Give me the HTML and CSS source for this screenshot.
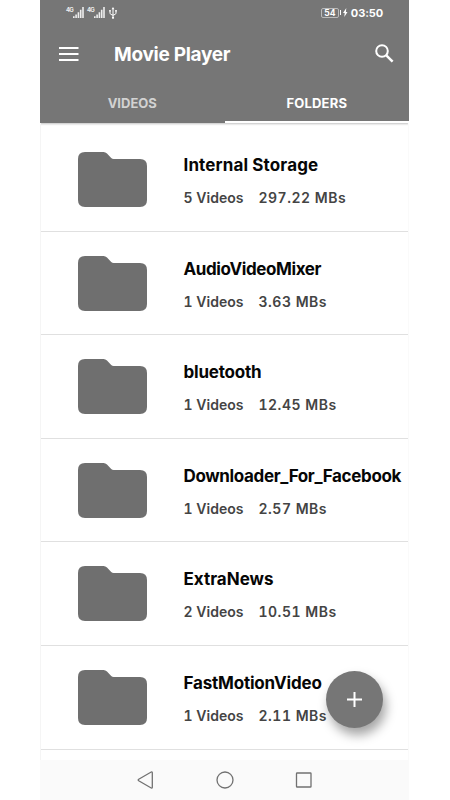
FILE: index.html
```html
<!DOCTYPE html>
<html lang="en">
<head>
    <meta charset="utf-8">
    <title>Movie Player</title>
    <link rel="stylesheet" href="styles.css">
</head>
<body>
    <!-- Shared icons -->
    <svg class="defs" width="0" height="0">
        <symbol id="folder" viewBox="0 0 69 55">
            <path d="M7 0H25.500q2 0 3.500 1.500l4.200 4.400q1 1 2.500 1H62q7 0 7 7V48q0 7-7 7H7q-7 0-7-7V7q0-7 7-7z" fill="currentColor"/>
        </symbol>
        <symbol id="signal" viewBox="0 0 11 11">
            <path d="M0 9.300h1.600V11H0zM2.300 7.500h1.600V11H2.300zM4.600 5.300h1.600V11H4.600zM6.900 2.700h1.600V11H6.900zM9.200 0h1.600v11H9.200z" fill="currentColor"/>
        </symbol>
    </svg>

    <div class="phone">
        <header class="header">
            <div class="status-bar">
                <div class="sim"><span>4G</span><svg width="11" height="11"><use href="#signal"/></svg></div>
                <div class="sim"><span>4G</span><svg width="11" height="11"><use href="#signal"/></svg></div>
                <svg class="usb" width="8" height="12" viewBox="0 0 8 12" fill="none" stroke="currentColor">
                    <path d="M4 1.500v9M1 4v2.200q0 1.300 3 2M7 4v2.200q0 1.300-3 2"/>
                    <path d="M2.600 2.200L4 0l1.400 2.200zM.2 3h1.600v1.600H.2zM6.200 3h1.600v1.600H6.200z" fill="currentColor" stroke="none"/>
                    <circle cx="4" cy="10.800" r="1.100" fill="currentColor" stroke="none"/>
                </svg>
                <div class="battery">54</div>
                <svg class="bolt" width="8" height="9" viewBox="0 0 8 9">
                    <path d="M0 2h1v5H0zM6.300 0L3 5h1.700L4.300 9l3.200-5H5.900z" fill="currentColor"/>
                </svg>
                <div class="clock">03:50</div>
            </div>
            <div class="toolbar">
                <svg class="menu" width="20" height="14" viewBox="0 0 20 14" stroke="currentColor" stroke-width="2">
                    <path d="M0 1h19.500M0 7h19.500M0 13h19.500"/>
                </svg>
                <h1>Movie Player</h1>
                <svg class="search" width="19" height="19" viewBox="0 0 19 19" fill="none" stroke="currentColor" stroke-width="2">
                    <circle cx="7" cy="7" r="5.800"/>
                    <path d="M11.300 11.300l6.300 6.300" stroke-width="2.500"/>
                </svg>
            </div>
            <nav class="tabs">
                <div class="tab">VIDEOS</div>
                <div class="tab active">FOLDERS</div>
            </nav>
        </header>

        <main class="list">
            <div class="row">
                <svg class="folder"><use href="#folder"/></svg>
                <div class="info">
                    <div class="name internal">Internal Storage</div>
                    <div class="meta"><span class="count">5 Videos</span><span class="size">297.22 MBs</span></div>
                </div>
            </div>
            <div class="row">
                <svg class="folder"><use href="#folder"/></svg>
                <div class="info">
                    <div class="name mixer">AudioVideoMixer</div>
                    <div class="meta"><span class="count">1 Videos</span><span class="size">3.63 MBs</span></div>
                </div>
            </div>
            <div class="row">
                <svg class="folder"><use href="#folder"/></svg>
                <div class="info">
                    <div class="name bluetooth">bluetooth</div>
                    <div class="meta"><span class="count">1 Videos</span><span class="size">12.45 MBs</span></div>
                </div>
            </div>
            <div class="row">
                <svg class="folder"><use href="#folder"/></svg>
                <div class="info">
                    <div class="name downloader">Downloader_For_Facebook</div>
                    <div class="meta"><span class="count">1 Videos</span><span class="size">2.57 MBs</span></div>
                </div>
            </div>
            <div class="row">
                <svg class="folder"><use href="#folder"/></svg>
                <div class="info">
                    <div class="name news">ExtraNews</div>
                    <div class="meta"><span class="count">2 Videos</span><span class="size">10.51 MBs</span></div>
                </div>
            </div>
            <div class="row">
                <svg class="folder"><use href="#folder"/></svg>
                <div class="info">
                    <div class="name motion">FastMotionVideo</div>
                    <div class="meta"><span class="count">1 Videos</span><span class="size">2.11 MBs</span></div>
                </div>
            </div>
        </main>

        <div class="fab">
            <svg width="15" height="15" viewBox="0 0 15 15" stroke="currentColor" stroke-width="2">
                <path d="M7.500 0v15M0 7.500h15"/>
            </svg>
        </div>

        <footer class="nav-bar">
            <svg width="18" height="18" viewBox="0 0 18 18"><path d="M1.700 8.300L14.200 1q1.100-.4 1.100.8v14.400q0 1.200-1.100.8L1.700 9.700q-1-.7 0-1.400z"/></svg>
            <svg width="18" height="18" viewBox="0 0 18 18"><circle cx="9" cy="9" r="8"/></svg>
            <svg width="18" height="18" viewBox="0 0 18 18"><rect x="1.500" y="2" width="14.500" height="14" rx=".6"/></svg>
        </footer>
    </div>
</body>
</html>
```

FILE: styles.css
```css
* {
    box-sizing: border-box;
}
body {
    margin: 0;
    background: #fff;
    font-family: Inter, "Liberation Sans", sans-serif;
    font-weight: 700;
}
svg {
    display: block;
    flex: none;
}
.defs {
    position: absolute;
}
.phone {
    position: relative;
    display: flex;
    flex-direction: column;
    width: 369px;
    height: 800px;
    margin-left: 40px;
    overflow: hidden;
    white-space: nowrap;
}

/* Header */
.header {
    height: 123px;
    background: #767676;
    color: #fff;
    box-shadow: 0 1px 2px rgba(0, 0, 0, 0.25);
}
.status-bar {
    display: flex;
    align-items: center;
    height: 25px;
    padding: 0 26px;
}
.sim {
    display: flex;
    width: 21px;
    color: #eee;
}
.sim span {
    width: 7px;
    font-size: 6px;
    line-height: 6px;
    letter-spacing: -0.8px;
}
.usb {
    margin-left: 1px;
}
.battery {
    width: 18px;
    height: 10px;
    margin-left: auto;
    border: 1px solid #bbb;
    border-radius: 2px;
    font-size: 8.5px;
    line-height: 8px;
    text-align: center;
}
.bolt {
    margin: 0 3px 0 1px;
}
.clock {
    font-size: 11px;
    letter-spacing: -0.1px;
}
.toolbar {
    display: flex;
    align-items: center;
    height: 57px;
    padding: 0 15px 0 19px;
}
h1 {
    flex: 1;
    margin: 2px 0 0 35px;
    font-size: 19px;
    letter-spacing: -0.28px;
}
.tabs {
    display: flex;
    height: 41px;
}
.tab {
    flex: 1;
    line-height: 42px;
    text-align: center;
    font-size: 13px;
    color: #d2d2d2;
}
.active {
    color: #fff;
    letter-spacing: 0.2px;
    border-bottom: 2px solid #fff;
}

/* Folder list */
.list {
    flex: 1;
    padding-top: 5px;
    border-left: 1px solid #f5f5f5;
    border-right: 1px solid #fafafa;
}
.row {
    display: flex;
    height: 103.6px;
    padding: 24px 0 0 36.500px;
    border-bottom: 1.500px solid #e0e0e0;
}
.folder {
    width: 69px;
    height: 55px;
    color: #6f6f6f;
}
.info {
    margin-left: 37px;
}
.name {
    margin-top: 1px;
    font-size: 17px;
    line-height: 24px;
    color: #060606;
}
.internal {
    letter-spacing: 0.13px;
}
.mixer {
    letter-spacing: -0.4px;
}
.bluetooth {
    letter-spacing: -0.2px;
}
.downloader {
    letter-spacing: -0.35px;
}
.motion {
    letter-spacing: -0.2px;
}
.meta {
    display: flex;
    margin-top: 11px;
    font-size: 14px;
    line-height: 20px;
    font-weight: 600;
    font-variant-numeric: tabular-nums;
    color: #444;
}
.count {
    width: 75px;
}
.size {
    letter-spacing: 0.5px;
}

/* Floating add button */
.fab {
    position: absolute;
    left: 286px;
    top: 671px;
    display: flex;
    align-items: center;
    justify-content: center;
    width: 57px;
    height: 57px;
    border-radius: 50%;
    background: #767676;
    color: #fff;
    box-shadow: 3px 7px 11px rgba(0, 0, 0, 0.36);
}

/* System navigation */
.nav-bar {
    display: flex;
    justify-content: center;
    gap: 61px;
    height: 40px;
    padding-top: 11px;
    background: #fafafa;
}
.nav-bar svg {
    fill: none;
    stroke: #717171;
    stroke-width: 1.300px;
}
```
